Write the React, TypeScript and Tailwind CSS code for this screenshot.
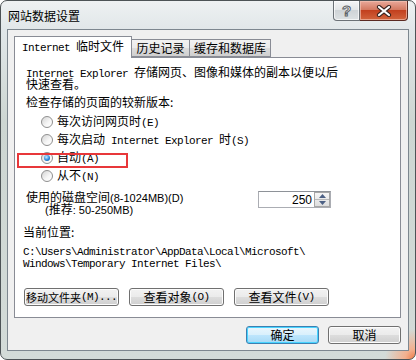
import React from 'react';

const cjk = "font-['Noto_Sans_CJK_SC',sans-serif]";
const M = ({ children }: { children: React.ReactNode }) => (
    <span className="font-['Liberation_Mono',monospace] text-[11px] tracking-[-0.6px]">{children}</span>
);

const Radio = ({ checked }: { checked?: boolean }) => (
    <span className="w-[12px] h-[12px] rounded-full border border-[#8f8f8f] bg-[linear-gradient(135deg,#d4d4d4,#f7f7f7_60%,#ffffff)] flex items-center justify-center shrink-0">
        {checked && (
            <span className="w-[6px] h-[6px] rounded-full bg-[radial-gradient(circle_at_40%_35%,#c9ecff,#2a87db_55%,#0d4a8c)]" />
        )}
    </span>
);

const Btn = ({ children, w = 'w-[95px]', main }: { children: React.ReactNode; w?: string; main?: boolean }) => (
    <div
        className={
            `${w} h-[18px] rounded-[3px] border flex items-center justify-center whitespace-nowrap overflow-hidden text-[12px] leading-[12px] ${cjk} ` +
            (main
                ? 'border-[#3c7fb1] bg-[linear-gradient(#eaf6fd,#d9f0fc_50%,#bee6fd_50%,#a7d9f5)] shadow-[inset_0_0_0_1px_#48d4ff]'
                : 'border-[#707070] bg-[linear-gradient(#f2f2f2,#ebebeb_50%,#dddddd_50%,#cfcfcf)] shadow-[inset_0_0_0_1px_#fcfcfc]')
        }
    >
        {children}
    </div>
);

const App = () => {
    return (
        <div className="w-[416px] h-[360px] rounded-[7px] border border-[#4d5356] overflow-hidden flex flex-col bg-[radial-gradient(circle_at_100%_100%,#ee7a45_0,#f3b08e_10px,transparent_30px),linear-gradient(180deg,#eef1f2_0%,#e1e7e9_28px,#cdd6d2_120px,#d3dbd8_100%)]">
            {/* title bar */}
            <div className="h-[28px] flex items-start shrink-0">
                <div className={`pl-[7px] pt-[8px] text-[12px] leading-[14px] text-black ${cjk}`}>网站数据设置</div>
                <div className="ml-auto mr-[7px] flex">
                    <div className="w-[27px] h-[20px] border border-t-0 border-[#6b7176] rounded-bl-[4px] bg-[linear-gradient(#f4f5f6,#e3e6e8_45%,#cfd4d7_50%,#dde1e3)] flex items-center justify-center shadow-[inset_0_0_0_1px_#ffffffaa]">
                        <span className="font-['Liberation_Sans',sans-serif] font-bold text-[15px] leading-[15px] text-white [-webkit-text-stroke:1px_#5c6266]">?</span>
                    </div>
                    <div className="w-[48px] h-[20px] border border-t-0 border-l-0 border-[#5a2a22] rounded-br-[4px] bg-[linear-gradient(#e9a99a,#d47a62_45%,#c2401f_50%,#d2643d)] flex items-center justify-center shadow-[inset_0_0_0_1px_#f3c3b4aa]">
                        <svg width="16" height="12" viewBox="0 0 16 12">
                            <path d="M3 2 L13 10 M13 2 L3 10" stroke="#3b2420" strokeWidth="4.2" strokeLinecap="round" />
                            <path d="M3 2 L13 10 M13 2 L3 10" stroke="#ffffff" strokeWidth="2.2" strokeLinecap="round" />
                        </svg>
                    </div>
                </div>
            </div>

            {/* client area */}
            <div className="ml-[6px] w-[402px] h-[322px] border border-[#7d878f] bg-[#f0f0f0] pt-[6px] pl-[6px] flex flex-col text-black">
                {/* tabs */}
                <div className="flex items-end h-[21px]">
                    <div className={`relative z-10 h-[22px] -mb-px w-[118px] border border-b-0 border-[#898c95] bg-white pl-[7px] pt-[3px] whitespace-nowrap text-[12px] leading-[12px] ${cjk}`}>
                        <M>Internet </M>临时文件
                    </div>
                    <div className={`h-[18px] w-[58px] border border-l-0 border-[#898c95] bg-[linear-gradient(#f2f2f2,#ebebeb_50%,#dddddd_50%,#cfcfcf)] flex items-center justify-center text-[12px] leading-[12px] ${cjk}`}>
                        历史记录
                    </div>
                    <div className={`h-[18px] w-[81px] border border-l-0 border-[#898c95] bg-[linear-gradient(#f2f2f2,#ebebeb_50%,#dddddd_50%,#cfcfcf)] flex items-center justify-center text-[12px] leading-[12px] ${cjk}`}>
                        缓存和数据库
                    </div>
                </div>

                {/* panel */}
                <div className={`w-[387px] h-[261px] border border-[#898c95] bg-white pl-[8px] flex flex-col text-[12px] leading-[12px] ${cjk}`}>
                    <div className="mt-[8px] ml-[3px]">
                        <div className="h-[12px]"><M>Internet Explorer </M>存储网页、图像和媒体的副本以便以后</div>
                        <div className="h-[12px]">快速查看。</div>
                    </div>
                    <div className="mt-[6px] ml-[3px] h-[12px]">检查存储的页面的较新版本:</div>

                    <div className="mt-[5px] ml-[18px] flex flex-col">
                        <div className="h-[18px] flex items-center gap-[4px]">
                            <Radio />
                            <span>每次访问网页时<M>(E)</M></span>
                        </div>
                        <div className="h-[18px] flex items-center gap-[4px]">
                            <Radio />
                            <span>每次启动<M> Internet Explorer </M>时<M>(S)</M></span>
                        </div>
                        <div className="relative h-[18px] flex items-center gap-[4px]">
                            <Radio checked />
                            <span>自动<M>(A)</M></span>
                            <span className="absolute left-[-24px] top-[4px] w-[111px] h-[15px] border-2 border-[#e8373a]" />
                        </div>
                        <div className="h-[18px] flex items-center gap-[4px]">
                            <Radio />
                            <span>从不<M>(N)</M></span>
                        </div>
                    </div>

                    <div className="mt-[6px] ml-[3px] flex items-start">
                        <div className="flex flex-col">
                            <div className="h-[12px]">使用的磁盘空间<span className="font-['Liberation_Sans',sans-serif] text-[11px]">(8-1024MB)(D)</span></div>
                            <div className="h-[12px] ml-[19px] font-['Liberation_Sans',sans-serif] text-[11px]">(<span className={cjk + ' text-[12px]'}>推荐</span>: 50-250MB)</div>
                        </div>
                        <div className="ml-auto mr-[69px] w-[73px] h-[17px] border border-[#abadb3] border-t-[#8e9298] bg-white flex items-center justify-end">
                            <span className="font-['Liberation_Sans',sans-serif] text-[12px] leading-[12px] mr-[2px]">250</span>
                            <div className="w-[16px] h-[15px] border border-[#a7a7a7] flex flex-col bg-[linear-gradient(#f6f6f6,#dedede)]">
                                <div className="flex-1 flex items-center justify-center border-b border-[#b9b9b9]">
                                    <svg width="7" height="4" viewBox="0 0 7 4"><path d="M0 4 L3.5 0 L7 4 Z" fill="#4d6185" /></svg>
                                </div>
                                <div className="flex-1 flex items-center justify-center">
                                    <svg width="7" height="4" viewBox="0 0 7 4"><path d="M0 0 L7 0 L3.5 4 Z" fill="#4d6185" /></svg>
                                </div>
                            </div>
                        </div>
                    </div>

                    <div className="mt-[11px] h-[12px]">当前位置:</div>
                    <div className="mt-[6px] flex flex-col">
                        <div className="h-[12px]"><M>C:\Users\Administrator\AppData\Local\Microsoft\</M></div>
                        <div className="h-[12px]"><M>Windows\Temporary Internet Files\</M></div>
                    </div>

                    <div className="mt-[20px] ml-[1px] flex gap-[10px]">
                        <Btn><span className="text-[11px]">移动文件夹</span><M>(M)...</M></Btn>
                        <Btn>查看对象<M>(O)</M></Btn>
                        <Btn>查看文件<M>(V)</M></Btn>
                    </div>
                </div>

                {/* dialog buttons */}
                <div className="mt-[8px] w-[387px] flex justify-end gap-[9px]">
                    <Btn w="w-[73px]" main>确定</Btn>
                    <Btn w="w-[73px]">取消</Btn>
                </div>
            </div>
        </div>
    );
};

export default App;
